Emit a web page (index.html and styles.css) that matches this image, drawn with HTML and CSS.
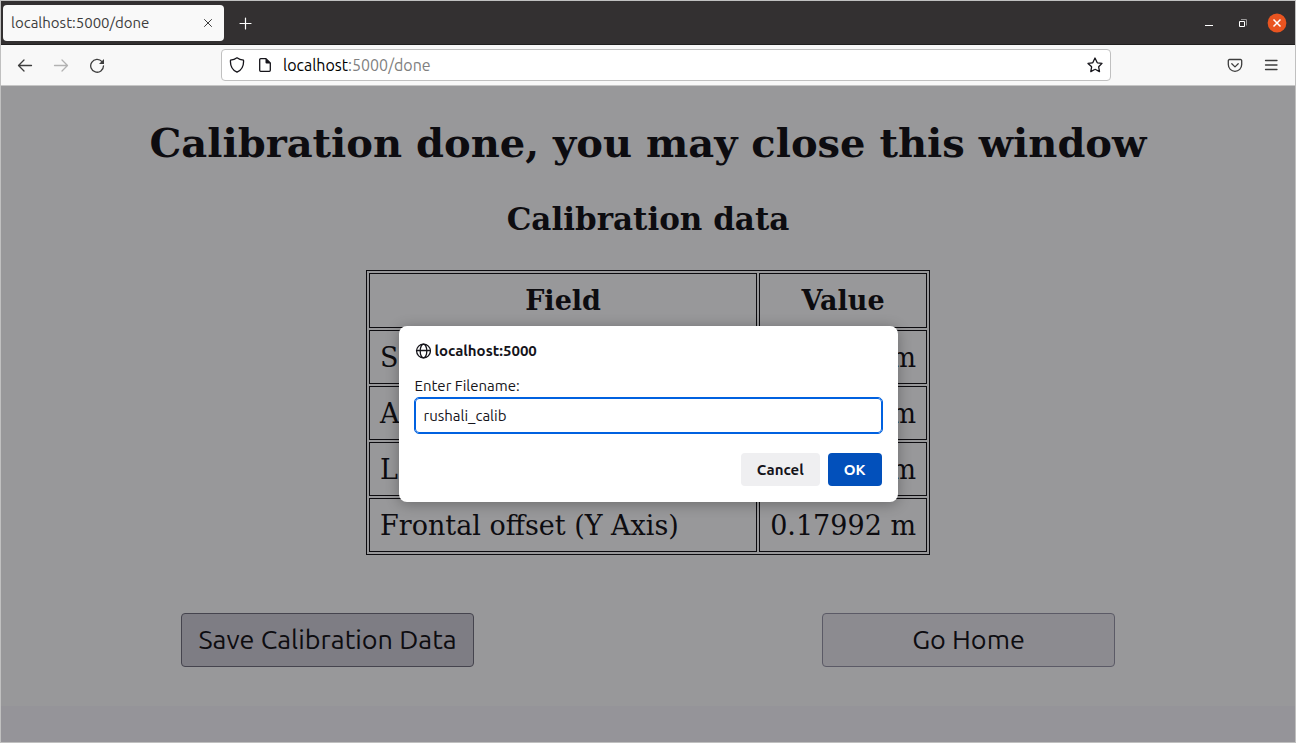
FILE: index.html
```html
<!DOCTYPE html>
<html lang="en">
<head>
<meta charset="utf-8">
<title>localhost:5000/done</title>
<link rel="stylesheet" href="styles.css">
</head>
<body>
<div class="window">
  <header class="tabbar">
    <div class="tab">
      <span class="tab-title">localhost:5000/done</span>
      <button class="tab-close" aria-label="Close tab">
        <svg class="icon" width="16" height="16" viewBox="0 0 16 16"><path d="M4.5 4.500l7 7M11.500 4.500l-7 7"/></svg>
      </button>
    </div>
    <button class="new-tab" aria-label="New tab">
      <svg class="icon" width="16" height="16" viewBox="0 0 16 16"><path d="M8.500 3v11M3 8.500h11" stroke-width="1.200"/></svg>
    </button>
    <div class="window-controls">
      <button class="control" aria-label="Minimize">
        <svg width="20" height="20" viewBox="0 0 20 20"><path d="M6 12h8v1H6z" fill="#fff"/></svg>
      </button>
      <button class="control" aria-label="Restore">
        <svg width="20" height="20" viewBox="0 0 20 20" fill="none"><path d="M8 6.500h5.500v6" stroke="#9a9898"/><path d="M6.500 8.500h5v5h-5z" stroke="#fff"/></svg>
      </button>
      <button class="control" aria-label="Close">
        <svg width="20" height="20" viewBox="0 0 20 20"><circle cx="10" cy="10" r="9.400" fill="#e95420"/><path d="M6.500 6.500l7 7M13.500 6.500l-7 7" stroke="#fff" stroke-width="1.500"/></svg>
      </button>
    </div>
  </header>

  <nav class="toolbar" aria-label="Navigation">
    <div class="nav-buttons">
      <button class="tool" aria-label="Back">
        <svg class="icon" width="16" height="16" viewBox="0 0 16 16"><path d="M14.500 8.500H1.800M7 3L1.500 8.500 7 14"/></svg>
      </button>
      <button class="tool tool-disabled" aria-label="Forward" disabled>
        <svg class="icon" width="16" height="16" viewBox="0 0 16 16"><path d="M1.500 8.500h12.700M9 3l5.500 5.500L9 14"/></svg>
      </button>
      <button class="tool" aria-label="Reload">
        <svg class="icon" width="16" height="16" viewBox="0 0 16 16"><path d="M13 4.700A6.400 6.400 0 1 0 14.500 8.800"/><path d="M15 2v5h-5z" fill="currentColor" stroke="none"/></svg>
      </button>
    </div>
    <div class="urlbar">
      <svg class="icon" width="16" height="16" viewBox="0 0 16 16"><path d="M8 .8C6.200 2.100 3.800 2.900 1.500 3.200c-.4 5 1.500 9.600 6.500 12 5-2.400 6.900-7 6.500-12C12.200 2.900 9.800 2.100 8 .8z"/></svg>
      <svg class="icon" width="16" height="16" viewBox="0 0 16 16"><path d="M3.700 1.700H9l4.300 4.300v7.300a1 1 0 0 1-1 1H3.700a1 1 0 0 1-1-1V2.700a1 1 0 0 1 1-1z"/><path d="M8.500 1.500L13.500 6.500h-4a1 1 0 0 1-1-1z" fill="currentColor" stroke="none"/></svg>
      <a class="address" href="#">localhost<span class="address-path">:5000/done</span></a>
      <button class="star" aria-label="Bookmark this page">
        <svg class="icon" width="16" height="16" viewBox="0 0 16 16"><path d="M8 1l2 4.300c.1.300.3.400.6.500l4.400.6-3.100 3.100c-.2.200-.3.500-.2.700l.8 4.400-3.900-2.100c-.3-.2-.6-.2-.9 0l-3.900 2.100.8-4.400c0-.3 0-.5-.2-.7L1 6.400l4.400-.6c.3 0 .5-.2.6-.5z"/></svg>
      </button>
    </div>
    <div class="tool-buttons">
      <button class="tool" aria-label="Save to Pocket">
        <svg class="icon" width="16" height="16" viewBox="0 0 16 16"><path d="M2.500 2.500h11a1.200 1.200 0 0 1 1.200 1.200v3.900a6.700 6.700 0 0 1-13.400 0V3.700a1.200 1.200 0 0 1 1.200-1.200z"/><path d="M4.800 6.800L8 9.900l3.200-3.100"/></svg>
      </button>
      <button class="tool" aria-label="Menu">
        <svg class="icon" width="16" height="16" viewBox="0 0 16 16"><path d="M2.500 3.500h11.500M2.500 8h11.500M2.500 12.500h11.500"/></svg>
      </button>
    </div>
  </nav>

  <div class="viewport">
    <main class="page">
      <h1 class="title">Calibration done, you may close this window</h1>
      <h2 class="subtitle">Calibration data</h2>
      <table class="data">
        <thead>
          <tr><th class="field">Field</th><th>Value</th></tr>
        </thead>
        <tbody>
          <tr><td>S</td><td class="value">m</td></tr>
          <tr><td>A</td><td class="value">m</td></tr>
          <tr><td>Le</td><td class="value">m</td></tr>
          <tr><td>Frontal offset (Y Axis)</td><td class="value">0.17992 m</td></tr>
        </tbody>
      </table>
      <div class="actions">
        <button class="action action-pressed">Save Calibration Data</button>
        <button class="action">Go Home</button>
      </div>
    </main>

    <div class="overlay">
      <form class="dialog" role="dialog" aria-labelledby="dialog-origin">
        <div class="origin">
          <svg class="icon" width="16" height="16" viewBox="0 0 16 16"><circle cx="8.500" cy="8" r="6.900"/><ellipse cx="8.500" cy="8" rx="3.300" ry="6.900"/><path d="M1.500 7.500h14"/></svg>
          <strong id="dialog-origin">localhost:5000</strong>
        </div>
        <label class="prompt" for="filename">Enter Filename:</label>
        <input class="filename" id="filename" type="text" value="rushali_calib">
        <div class="dialog-buttons">
          <button class="button" type="button">Cancel</button>
          <button class="button button-primary" type="button">OK</button>
        </div>
      </form>
    </div>
  </div>
</div>
</body>
</html>
```
FILE: styles.css
```css
* {
  box-sizing: border-box;
}

body {
  margin: 0;
  font-family: Ubuntu, "Noto Sans", sans-serif;
  font-size: 15px;
  color: #15141a;
}

button {
  margin: 0;
  padding: 0;
  border: 0;
  background: none;
  color: inherit;
  font: inherit;
}

svg {
  display: block;
  flex: none;
}

.icon {
  fill: none;
  stroke: currentColor;
  stroke-width: 1.3;
  stroke-linecap: round;
  stroke-linejoin: round;
}

.window {
  display: flex;
  flex-direction: column;
  min-height: 100vh;
  border: 1px solid #c0c0c0;
}

/* Tab strip */
.tabbar {
  display: flex;
  align-items: center;
  height: 44px;
  padding: 0 8px 0 2px;
  border-bottom: 1px solid #201f1f;
  background: #333031;
  color: #fff;
}

.tab {
  display: flex;
  align-items: center;
  justify-content: space-between;
  width: 221px;
  height: 36px;
  padding: 0 8px;
  border-radius: 4px;
  background: #f9f9f9;
  color: #3d3d3d;
}

.tab-close .icon {
  stroke-width: 1;
}

.new-tab {
  padding: 0 13px;
}

.window-controls {
  display: flex;
  align-items: center;
  gap: 14px;
  margin-left: auto;
}

/* Toolbar */
.toolbar {
  display: flex;
  align-items: center;
  height: 41px;
  border-bottom: 1px solid #c6c6c6;
  background: #f8f8f8;
}

.nav-buttons,
.tool-buttons {
  display: flex;
  gap: 20px;
  padding: 0 16px;
  color: #3d3d3d;
}

.nav-buttons {
  width: 220px;
}

.tool-buttons {
  justify-content: flex-end;
  width: 184px;
}

.tool-disabled {
  color: #b2b2b2;
}

.urlbar {
  display: flex;
  flex: 1;
  align-items: center;
  gap: 12px;
  height: 32px;
  padding: 0 7px;
  border: 1px solid #c0c0c0;
  border-radius: 4px;
  background: #fff;
}

.address {
  flex: 1;
  margin-left: -2px;
  color: #000;
  font-size: 16px;
  text-decoration: none;
}

.address-path {
  color: #808080;
}

/* Page */
.viewport {
  position: relative;
  flex: 1;
  background: #959499;
}

.page {
  display: flex;
  flex-direction: column;
  align-items: center;
  padding: 33px 6px 39px;
  background: #98989a;
  color: #0d0c10;
  font-family: "DejaVu Serif", serif;
}

.title {
  margin: 0 0 33px;
  font-size: 40px;
  line-height: 48px;
}

.subtitle {
  margin: 0 0 32px;
  font-size: 31px;
  line-height: 38px;
}

.data {
  width: 564px;
  border: 1px solid #0d0c10;
  border-spacing: 2px;
  font-size: 27px;
  line-height: 32px;
}

.data th,
.data td {
  padding: 11px 10px 9px;
  border: 1px solid #0d0c10;
}

.data th {
  padding-bottom: 10px;
}

.data .field {
  width: 100%;
}

.value {
  text-align: right;
  white-space: nowrap;
}

.actions {
  display: grid;
  grid-template-columns: 1fr 1fr;
  justify-items: center;
  width: 100%;
  margin-top: 58px;
}

.action {
  width: 293px;
  height: 54px;
  padding-bottom: 2px;
  border: 1px solid #5b5a66;
  border-radius: 4px;
  background: #8c8b90;
  font-family: Ubuntu, "Noto Sans", sans-serif;
  font-size: 27px;
}

.action-pressed {
  border-color: #45444e;
  background: #7e7d84;
}

/* Prompt */
.overlay {
  position: absolute;
  inset: 0;
  display: flex;
  align-items: center;
  justify-content: center;
}

.dialog {
  width: 499px;
  padding: 16px;
  border-radius: 8px;
  background: #fff;
  box-shadow: 0 2px 14px rgba(0, 0, 0, 0.3);
  line-height: 18px;
}

.origin {
  display: flex;
  align-items: center;
  gap: 4px;
  margin-bottom: 17px;
}

.prompt {
  display: block;
  margin-bottom: 3px;
}

.filename {
  display: block;
  width: 100%;
  height: 35px;
  padding: 0 8px 1px;
  border: 1px solid #0061e0;
  border-radius: 4px;
  outline: 1px solid #0061e0;
  background: #fff;
  color: #15141a;
  font: inherit;
}

.dialog-buttons {
  display: flex;
  justify-content: flex-end;
  gap: 8px;
  margin-top: 20px;
}

.button {
  height: 33px;
  padding: 0 16px;
  border-radius: 4px;
  background: #efeff1;
  font-weight: 700;
}

.button-primary {
  background: #0250bb;
  color: #fff;
}
```
